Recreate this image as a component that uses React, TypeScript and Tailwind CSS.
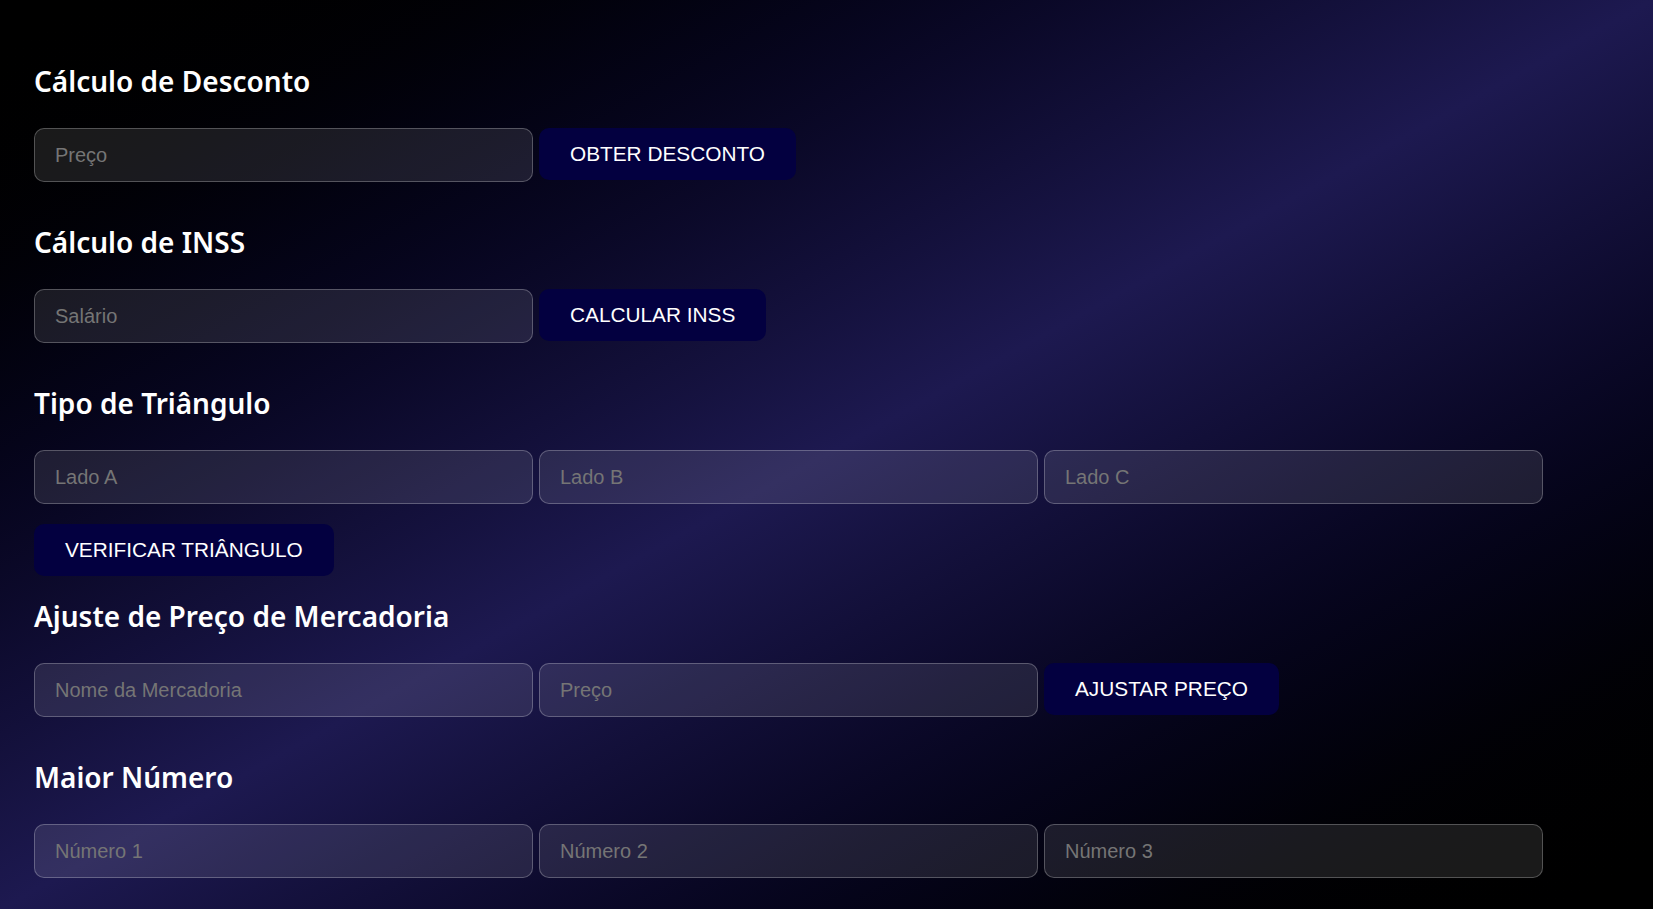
import React from "react";

interface SectionProps {
  title: string;
  fields: string[];
  action: string;
  actionBelow?: boolean;
}

const sections: SectionProps[] = [
  { title: "Cálculo de Desconto", fields: ["Preço"], action: "Obter Desconto" },
  { title: "Cálculo de INSS", fields: ["Salário"], action: "Calcular INSS" },
  {
    title: "Tipo de Triângulo",
    fields: ["Lado A", "Lado B", "Lado C"],
    action: "Verificar Triângulo",
    actionBelow: true,
  },
  {
    title: "Ajuste de Preço de Mercadoria",
    fields: ["Nome da Mercadoria", "Preço"],
    action: "Ajustar Preço",
  },
  { title: "Maior Número", fields: ["Número 1", "Número 2", "Número 3"], action: "" },
];

function Field({ placeholder }: { placeholder: string }) {
  return (
    <input
      type="text"
      placeholder={placeholder}
      className="w-[499px] h-[54px] shrink-0 rounded-[10px] border border-white/25 bg-white/10 px-5 text-[20px] text-white placeholder:text-[#757575] outline-none font-['Liberation_Sans',Arial,sans-serif]"
    />
  );
}

function ActionButton({ label }: { label: string }) {
  return (
    <button className="h-[52px] shrink-0 self-start rounded-[10px] bg-[#030040] px-[31px] text-[20.8px] uppercase text-white font-['Liberation_Sans',Arial,sans-serif]">
      {label}
    </button>
  );
}

export default function App() {
  return (
    <div className="min-h-screen w-full flex flex-col bg-linear-to-br from-black via-[#1d1950] to-black pl-[34px] pt-[41px]">
      {sections.map((section, idx) => (
        <div key={idx} className="flex flex-col">
          <h2 className="mt-5 mb-[27px] text-[28px] leading-[40px] font-semibold text-white font-['Noto_Sans',sans-serif]">
            {section.title}
          </h2>
          <div className="flex items-center gap-1.5 mb-5">
            {section.fields.map((f, i) => (
              <Field key={i} placeholder={f} />
            ))}
            {section.action && !section.actionBelow && <ActionButton label={section.action} />}
          </div>
          {section.actionBelow && <ActionButton label={section.action} />}
        </div>
      ))}
    </div>
  );
}
